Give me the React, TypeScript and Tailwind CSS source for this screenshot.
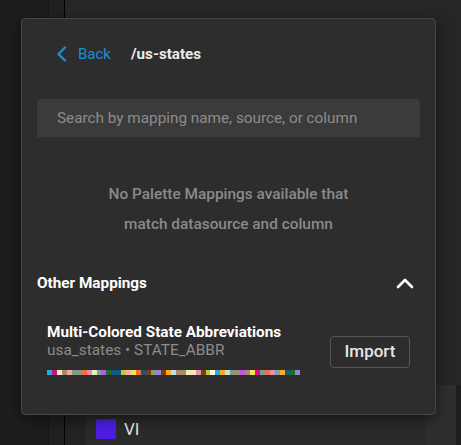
import React from 'react';

const paletteColors = [
  '#29abe2', '#c2177a', '#ebebb5', '#a88a70', '#f4a6a0', '#83998a', '#83998a', '#ff6b35',
  '#e391b8', '#e9edbe', '#7f9db3', '#c355e0', '#1e6b2a', '#0f5a8c', '#0f5a8c', '#bccc38',
  '#f8b595', '#efe15a', '#fc6e2e', '#0f5a8c', '#7a4012', '#8a9a7a', '#9781d9', '#7a4012',
  '#fbad18', '#b6e0ef', '#a88a70', '#a88a70', '#ebebb5', '#fde1b0', '#e391b8', '#7a4012',
  '#bccc38', '#fffed6', '#29abe2', '#fbad18', '#b6e0ef', '#83998a', '#a88a70', '#c355e0',
  '#a88a70', '#efe15a', '#ec008c', '#83998a', '#ff6b35', '#e391b8', '#7f9db3', '#fbad18',
  '#0f5a8c', '#1e6b2a', '#9781d9',
];

const ChevronLeft = () => (
  <svg width="11" height="16" viewBox="0 0 11 16" fill="none">
    <polyline points="9,1.5 2.5,8 9,14.5" stroke="#1a8fd6" strokeWidth="2.4" strokeLinecap="round" strokeLinejoin="round" />
  </svg>
);

const ChevronUp = () => (
  <svg width="18" height="12" viewBox="0 0 18 12" fill="none">
    <polyline points="2,10 9,3 16,10" stroke="#ffffff" strokeWidth="2.6" strokeLinecap="round" strokeLinejoin="round" />
  </svg>
);

const PaletteStrip = ({ colors }: { colors: string[] }) => (
  <div className="flex w-[253px] h-[5px]">
    {colors.map((c, i) => (
      <div key={i} className="flex-1 h-full" style={{ backgroundColor: c }} />
    ))}
  </div>
);

export default function App() {
  return (
    <div
      className="relative flex w-[461px] h-[445px] overflow-hidden bg-[#262626]"
      style={{ fontFamily: 'Roboto, "Liberation Sans", sans-serif' }}
    >
      {/* app chrome behind the popover */}
      <div className="w-[49px] h-full bg-[#1c1d1d] border-r border-[#181818]" />
      <div className="w-[16px] h-full bg-[#1f2020] border-r border-black" />
      <div className="flex-1 flex flex-col">
        <div className="flex-1" />
        <div className="flex h-[60px]">
          <div className="w-[21px] bg-[#222222]" />
          <div className="w-[340px] bg-[#2a2a2a] flex items-end pb-[6px] pl-[10px] gap-2">
            <div className="w-[20px] h-[20px] rounded-[2px] bg-[#4d1de3]" />
            <span className="text-[17px] leading-[20px] text-[#e6e6e6]">VI</span>
          </div>
          <div className="w-[30px] bg-[#2e2e2e]" />
          <div className="flex-1 bg-[#1e1e1e]" />
        </div>
      </div>

      {/* palette mapping popover */}
      <div className="absolute left-[21px] top-[18px] w-[415px] h-[397px] bg-[#2d2d2d] border border-[#474747] rounded-[4px] shadow-[0_4px_14px_rgba(0,0,0,0.5)] px-[15px]">
        <div className="flex items-center h-[22px] mt-[24px] pl-[19px]">
          <ChevronLeft />
          <span className="ml-[11px] text-[15px] text-[#1a8fd6]">Back</span>
          <span className="ml-[20px] text-[15.2px] font-bold text-[#ebebeb]">/us-states</span>
        </div>

        <div className="mt-[34px] h-[39px] bg-[#3b3b3b] rounded-t-[4px] border-b border-[#303030] flex items-center px-[20px]">
          <span className="text-[15.3px] text-[#8c8c8c]">Search by mapping name, source, or column</span>
        </div>

        <div className="mt-[41px] text-center text-[15.4px] font-medium leading-[30px] text-[#8a8a8a]">
          <div>No Palette Mappings available that</div>
          <div>match datasource and column</div>
        </div>

        <div className="mt-[32px] flex items-center justify-between h-[24px] pr-[6px]">
          <span className="text-[15.3px] font-bold text-white">Other Mappings</span>
          <ChevronUp />
        </div>

        <div className="mt-[28px] flex items-start justify-between pl-[10px] pr-[10px]">
          <div className="flex flex-col">
            <span className="text-[15.3px] font-bold leading-[18px] text-white">Multi-Colored State Abbreviations</span>
            <span className="text-[15.4px] leading-[18px] text-[#8c8c8c]">usa_states • STATE_ABBR</span>
            <div className="mt-[11px]">
              <PaletteStrip colors={paletteColors} />
            </div>
          </div>
          <button className="mt-[13px] w-[80px] h-[32px] rounded-[4px] border border-[#565656] text-[17px] font-medium text-[#e6e6e6]">
            Import
          </button>
        </div>
      </div>
    </div>
  );
}
